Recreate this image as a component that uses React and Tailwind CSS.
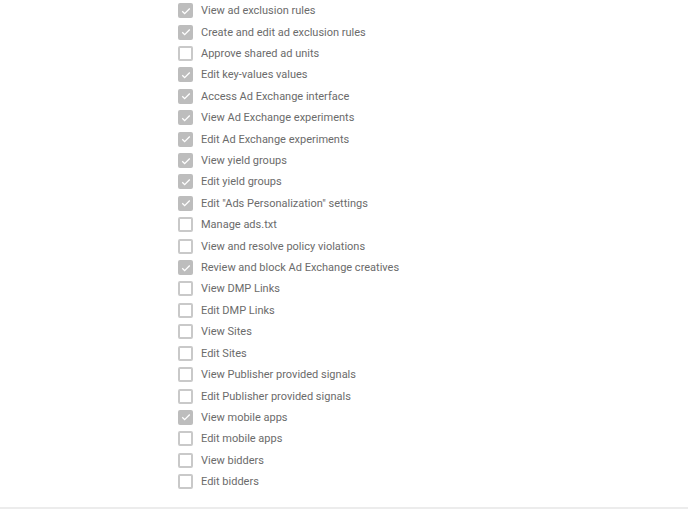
import React from 'react';

const permissions = [
  ['View ad exclusion rules', true],
  ['Create and edit ad exclusion rules', true],
  ['Approve shared ad units', false],
  ['Edit key-values values', true],
  ['Access Ad Exchange interface', true],
  ['View Ad Exchange experiments', true],
  ['Edit Ad Exchange experiments', true],
  ['View yield groups', true],
  ['Edit yield groups', true],
  ['Edit "Ads Personalization" settings', true],
  ['Manage ads.txt', false],
  ['View and resolve policy violations', false],
  ['Review and block Ad Exchange creatives', true],
  ['View DMP Links', false],
  ['Edit DMP Links', false],
  ['View Sites', false],
  ['Edit Sites', false],
  ['View Publisher provided signals', false],
  ['Edit Publisher provided signals', false],
  ['View mobile apps', true],
  ['Edit mobile apps', false],
  ['View bidders', false],
  ['Edit bidders', false],
];

const Checkbox = ({ checked }) =>
  checked ? (
    <span className="w-[15px] h-[15px] rounded-[2px] bg-[#bdbdbd] flex items-center justify-center flex-shrink-0">
      <svg width="12" height="12" viewBox="0 0 24 24" fill="none">
        <path d="M4.5 12.5l4.8 4.8L19.5 7" stroke="white" strokeWidth="2.6" />
      </svg>
    </span>
  ) : (
    <span className="w-[15px] h-[15px] rounded-[2px] border-2 border-[#c9c9c9] bg-white flex-shrink-0" />
  );

export default function App() {
  return (
    <div className="w-[688px] h-[510px] bg-white overflow-hidden flex flex-col" style={{ fontFamily: 'Roboto, sans-serif' }}>
      <div className="flex-1 pl-[178px]">
        {permissions.map(([label, checked]) => (
          <div key={label} className="h-[21.42px] flex items-center">
            <Checkbox checked={checked} />
            <span className="ml-[8px] text-[11px] text-[#6b6b6b] leading-none">{label}</span>
          </div>
        ))}
      </div>
      <div className="h-[2px] bg-[#ececec] mb-[1px]" />
    </div>
  );
}
